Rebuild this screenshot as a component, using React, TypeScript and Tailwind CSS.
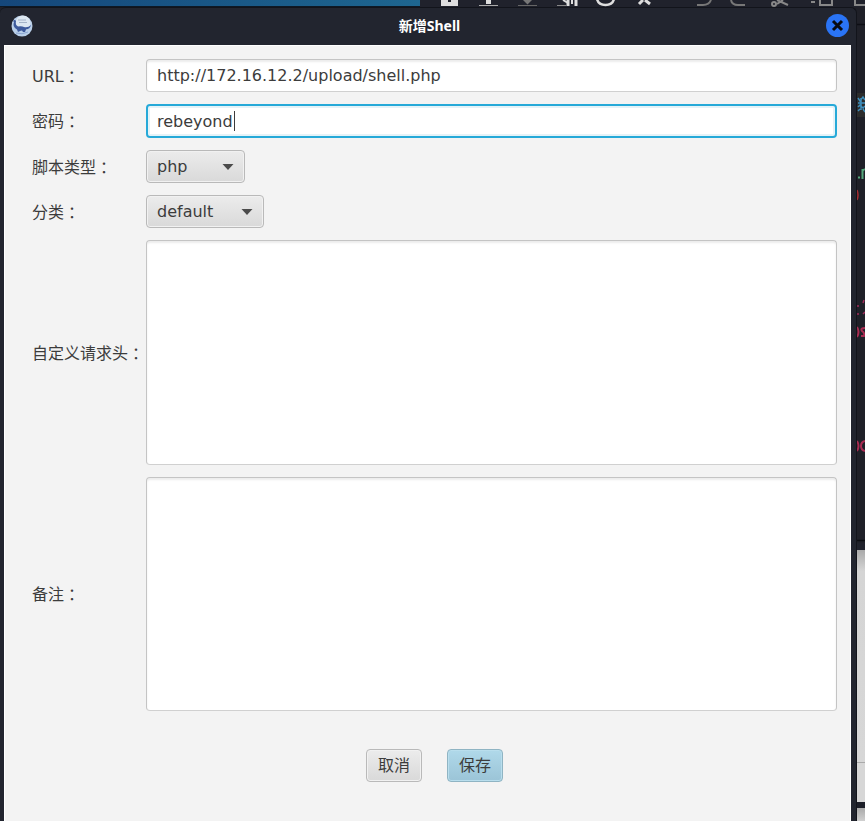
import type { ReactNode } from "react";

const FIELD =
  "rounded border border-[#c4c4c4] border-b-[#d0d0d0] bg-white text-[#3c3c3c] outline-none shadow-[inset_0_2px_2px_#ececec]";

function Row({ id, label, children }: { id: string; label: string; children: ReactNode }) {
  return (
    <>
      <label htmlFor={id} className="self-center whitespace-nowrap">
        {label}
        <span className="ml-1 font-['Noto_Sans_CJK_SC',sans-serif]">：</span>
      </label>
      {children}
    </>
  );
}

function Combo({ id, value, width }: { id: string; value: string; width: string }) {
  return (
    <div className={`relative ${width}`}>
      <select
        id={id}
        className="block h-[33px] w-full appearance-none rounded border border-[#b9b9b9] bg-linear-to-b from-[#ececec] to-[#d9d9d9] pl-[10px] shadow-[inset_0_0_0_1px_#f1f1f1] outline-none"
      >
        <option>{value}</option>
      </select>
      <svg viewBox="0 0 12 6" className="pointer-events-none absolute top-[14px] right-[11px] h-[6px] w-[12px]">
        <path d="M0.5 0H11.5L6 6Z" fill="#4b4b4b" />
      </svg>
    </div>
  );
}

function Toolbar() {
  return (
    <svg viewBox="420 0 445 7" className="h-[7px] w-[445px] shrink-0 bg-[#20222c]" fill="none" strokeWidth="2">
      <path d="M441 0H458V6H441Z" fill="#dedede" />
      <path d="M448 0H451V2H448Z" fill="#20222c" />
      <path d="M486 0H491V4H486Z" fill="#dedede" />
      <path d="M479 5.500H498" stroke="#aaa" strokeWidth="1" />
      <path d="M523 0H532L527.500 4.500Z" fill="#777" />
      <path d="M518 5.500H537" stroke="#666" strokeWidth="1" />
      <path d="M557 5.500H566" stroke="#888" strokeWidth="1" />
      <path d="M563 0L568 3" stroke="#dedede" />
      <path d="M568 0V6M576 0V6" stroke="#dedede" strokeWidth="3" />
      <path d="M572 0V4" stroke="#dedede" />
      <path d="M597 -1C599 7 612 7 614 -1" stroke="#dedede" strokeWidth="2.500" />
      <path d="M639 4L643 0M645 0L650 4" stroke="#dedede" strokeWidth="3" />
      <path d="M697 5H703Q709 5 711 0M745 5H738Q732 5 731 0" stroke="#777" />
      <path d="M777 0L788 5M783 0L777 4" stroke="#888" />
      <circle cx="774" cy="4" r="2" stroke="#888" />
      <path d="M811 2H815M820 0V5H832V-1M855 -1V5H866" stroke="#888" />
    </svg>
  );
}

function Terminal() {
  return (
    <div aria-hidden="true" className="flex w-[8px] shrink-0 flex-col bg-[#1f2028]">
      <svg viewBox="0 7 8 536" className="h-[536px] w-[8px] shrink-0" fill="none" strokeWidth="1.500">
        <path d="M0 24.500H8" stroke="#0d0e14" />
        <path d="M0 93H8V117H0Z" fill="#2c2c2c" />
        <path
          d="M1 98L3 101L6 97L8 100M1 103H8M4 98V110M1 107L3 105L6 108L8 106M1 111L3 109M6 109L8 112"
          stroke="#3f8fbd"
        />
        <path d="M1 177.500H3" stroke="#56a77c" strokeWidth="2" />
        <path d="M5.500 179V169M5.500 171Q7 169 8 169.500" stroke="#56a77c" strokeWidth="2" />
        <path d="M0 190Q2 195 0 200" stroke="#a82c32" />
        <path d="M1 305V307M1 313V315M7 300L6 303M6 314L8 312" stroke="#a12a59" />
        <path d="M0 327Q3 332 0 337M8 328Q3 328 5 331Q8 333 7 336H4" stroke="#a92b52" strokeWidth="2" />
        <path d="M0 441Q3 446 0 451M8 441Q4 442 4 446Q4 450 8 451" stroke="#a92b52" strokeWidth="2" />
        <path d="M0 540.500H8" stroke="#0b0c11" />
      </svg>
      <div className="h-[7px] shrink-0 bg-[#20222c]" />
      <div className="h-[213px] shrink-0 border-b border-[#aaa] bg-linear-to-b from-[#aaa] via-[#d5d5d5] via-10% to-[#d7d7d7]" />
      <div className="h-[39px] shrink-0 bg-[#d7d7d7]" />
      <div className="h-[6px] shrink-0 bg-[#1c1e28]" />
      <div className="flex-1 bg-linear-to-b from-[#aaa] to-[#d0d0d0]" />
    </div>
  );
}

function AppLogo() {
  return (
    <svg viewBox="0 0 22 22" className="size-[22px]">
      <circle cx="11" cy="11" r="10.500" fill="#b9cfe9" />
      <circle cx="12" cy="8" r="7.500" fill="#dce7f2" />
      <path d="M7 5H15M8 7.500H16" stroke="#a5b4c9" strokeWidth="1" />
      <path
        d="M2 6Q4 4 5 6Q4 10 7 11.500Q11 11 13 12Q17 13 20 10Q19 14 15 14.500L14 17H12L11 15.500L9 16L7 17L6 14.500Q1 12 3 7Z"
        fill="#3d5a9c"
      />
      <path d="M5 18Q11 20 17 17" stroke="#8aa6d2" fill="none" />
    </svg>
  );
}

export default function App() {
  return (
    <div className="flex h-screen min-h-[821px] flex-col overflow-hidden bg-[#1f2028] font-['DejaVu_Sans','Noto_Sans_CJK_SC',sans-serif] text-[16px] leading-[24px] text-[#3c3c3c]">
      <div className="flex h-[7px] shrink-0">
        <div className="flex-1 border-b border-[#0d1825] bg-linear-to-r from-[#15477b] to-[#1e6690]" />
        <Toolbar />
      </div>
      <div className="flex flex-1">
        <main className="flex min-w-0 flex-1 flex-col rounded-t-md border-t border-r border-[#12141b] bg-[#22252f] pr-[5px] pl-[4px]">
          <header className="grid h-[37px] shrink-0 grid-cols-[22px_1fr_23px] items-center pr-[2px] pb-[2px] pl-[7px]">
            <AppLogo />
            <h1 className="text-center font-['Noto_Sans','Noto_Sans_CJK_SC',sans-serif] text-[14px] font-bold text-white">
              新增Shell
            </h1>
            <button type="button" aria-label="关闭" className="size-[23px] rounded-full bg-[#2a74f5]">
              <svg viewBox="0 0 23 23" className="size-[23px]">
                <path d="M7 7L16 16M16 7L7 16" stroke="#080b12" strokeWidth="3" />
              </svg>
            </button>
          </header>
          <form className="flex flex-1 flex-col border border-b-0 border-white bg-[#f3f3f3] pr-[13px] pl-[27px]">
            <div className="grid grid-cols-[114px_1fr] gap-y-[12px] pt-[13px]">
              <Row id="url" label="URL">
                <input id="url" defaultValue="http://172.16.12.2/upload/shell.php" className={`h-[33px] w-full px-[10px] ${FIELD}`} />
              </Row>
              <Row id="password" label="密码">
                <div className="relative">
                  <input
                    id="password"
                    defaultValue="rebeyond"
                    className="block h-[34px] w-full rounded border-2 border-[#26a9d8] bg-white px-[9px] text-[#3c3c3c] shadow-[inset_0_0_0_2px_#e5f3f8] outline-none"
                  />
                  <span className="absolute top-[7px] left-[88px] h-[20px] w-px bg-[#3c3c3c]" />
                </div>
              </Row>
              <Row id="script" label="脚本类型">
                <Combo id="script" value="php" width="w-[99px]" />
              </Row>
              <Row id="category" label="分类">
                <Combo id="category" value="default" width="w-[118px]" />
              </Row>
              <Row id="headers" label="自定义请求头">
                <textarea id="headers" className={`block h-[225px] w-full resize-none p-[10px] ${FIELD}`} />
              </Row>
              <Row id="notes" label="备注">
                <textarea id="notes" className={`block h-[234px] w-full resize-none p-[10px] ${FIELD}`} />
              </Row>
            </div>
            <div className="flex justify-center gap-[25px] pt-[38px]">
              <button type="button" className="h-[33px] w-[56px] rounded border border-[#b9b9b9] bg-linear-to-b from-[#ececec] to-[#d9d9d9] shadow-[inset_0_0_0_1px_#f1f1f1]">
                取消
              </button>
              <button type="submit" className="h-[33px] w-[56px] rounded border border-[#8fb4c3] bg-linear-to-b from-[#b0d9ea] to-[#9bc4d7] shadow-[inset_0_0_0_1px_#b9deed]">
                保存
              </button>
            </div>
          </form>
        </main>
        <Terminal />
      </div>
    </div>
  );
}
